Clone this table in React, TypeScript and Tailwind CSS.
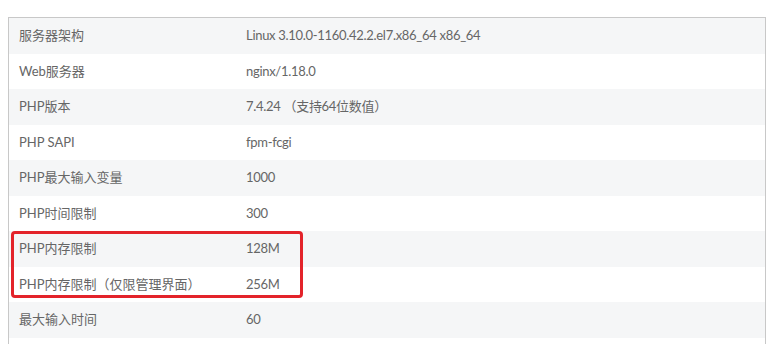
import React from 'react';

const rows: [string, string][] = [
  ['服务器架构', 'Linux 3.10.0-1160.42.2.el7.x86_64 x86_64'],
  ['Web服务器', 'nginx/1.18.0'],
  ['PHP版本', '7.4.24 （支持64位数值）'],
  ['PHP SAPI', 'fpm-fcgi'],
  ['PHP最大输入变量', '1000'],
  ['PHP时间限制', '300'],
  ['PHP内存限制', '128M'],
  ['PHP内存限制（仅限管理界面）', '256M'],
  ['最大输入时间', '60'],
];

const Row = ({ label, value, striped }: { label: string; value: string; striped: boolean }) => (
  <div className={`flex items-center h-[35.5px] ${striped ? 'bg-[#f5f6f7]' : 'bg-white'}`}>
    <div className="w-[237px] pl-[10px] shrink-0">{label}</div>
    <div className="tracking-[-0.3px]">{value}</div>
  </div>
);

export default function App() {
  return (
    <div
      className="w-[779px] h-[344px] overflow-hidden bg-white pt-[17px] pl-2 text-[13px] text-[#666]"
      style={{ fontFamily: '"Lato", "Noto Sans CJK SC", sans-serif' }}
    >
      <div className="w-[758px] border-l border-t border-r border-[#c8c8c8]">
        {rows.slice(0, 6).map(([l, v], i) => (
          <Row key={l} label={l} value={v} striped={i % 2 === 0} />
        ))}
        {/* highlighted memory rows */}
        <div className="relative">
          <Row label={rows[6][0]} value={rows[6][1]} striped />
          <Row label={rows[7][0]} value={rows[7][1]} striped={false} />
          <div className="absolute top-0 left-[2px] w-[292px] h-[67px] border-[3px] border-[#e3232a] rounded-[4px]" />
        </div>
        {rows.slice(8).map(([l, v]) => (
          <Row key={l} label={l} value={v} striped />
        ))}
        <div className="h-[20px] bg-white" />
      </div>
    </div>
  );
}
